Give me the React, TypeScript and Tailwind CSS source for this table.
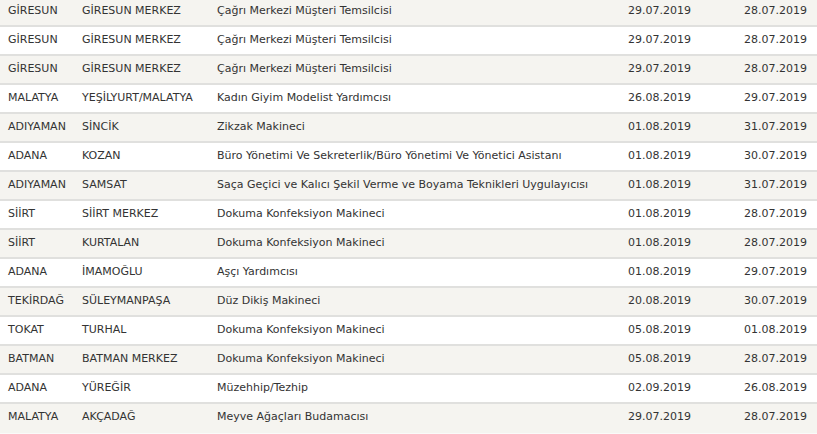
const rows = [
  ["GİRESUN", "GİRESUN MERKEZ", "Çağrı Merkezi Müşteri Temsilcisi", "29.07.2019", "28.07.2019"],
  ["GİRESUN", "GİRESUN MERKEZ", "Çağrı Merkezi Müşteri Temsilcisi", "29.07.2019", "28.07.2019"],
  ["GİRESUN", "GİRESUN MERKEZ", "Çağrı Merkezi Müşteri Temsilcisi", "29.07.2019", "28.07.2019"],
  ["MALATYA", "YEŞİLYURT/MALATYA", "Kadın Giyim Modelist Yardımcısı", "26.08.2019", "29.07.2019"],
  ["ADIYAMAN", "SİNCİK", "Zikzak Makineci", "01.08.2019", "31.07.2019"],
  ["ADANA", "KOZAN", "Büro Yönetimi Ve Sekreterlik/Büro Yönetimi Ve Yönetici Asistanı", "01.08.2019", "30.07.2019"],
  ["ADIYAMAN", "SAMSAT", "Saça Geçici ve Kalıcı Şekil Verme ve Boyama Teknikleri Uygulayıcısı", "01.08.2019", "31.07.2019"],
  ["SİİRT", "SİİRT MERKEZ", "Dokuma Konfeksiyon Makineci", "01.08.2019", "28.07.2019"],
  ["SİİRT", "KURTALAN", "Dokuma Konfeksiyon Makineci", "01.08.2019", "28.07.2019"],
  ["ADANA", "İMAMOĞLU", "Aşçı Yardımcısı", "01.08.2019", "29.07.2019"],
  ["TEKİRDAĞ", "SÜLEYMANPAŞA", "Düz Dikiş Makineci", "20.08.2019", "30.07.2019"],
  ["TOKAT", "TURHAL", "Dokuma Konfeksiyon Makineci", "05.08.2019", "01.08.2019"],
  ["BATMAN", "BATMAN MERKEZ", "Dokuma Konfeksiyon Makineci", "05.08.2019", "28.07.2019"],
  ["ADANA", "YÜREĞİR", "Müzehhip/Tezhip", "02.09.2019", "26.08.2019"],
  ["MALATYA", "AKÇADAĞ", "Meyve Ağaçları Budamacısı", "29.07.2019", "28.07.2019"],
];

export default function App() {
  return (
    <div className="h-[434px] w-[817px] overflow-hidden bg-[#fafaf9]">
      <div
        className="-mt-[2px] text-[11px] text-[#333]"
        style={{ fontFamily: '"DejaVu Sans", Verdana, sans-serif' }}
      >
        {rows.map((r, i) => (
          <div
            key={i}
            className={`grid h-[29px] grid-cols-[82px_135px_1fr_100px_118px] items-center ${
              i < rows.length - 1 ? "border-b-2 border-[#e0e0de]" : "border-b-2 border-[#f5f4f0]"
            } ${i % 2 === 0 ? "bg-[#f5f4f0]" : "bg-white"}`}
          >
            <div className="pl-2 whitespace-nowrap">{r[0]}</div>
            <div className="whitespace-nowrap">{r[1]}</div>
            <div className="whitespace-nowrap">{r[2]}</div>
            <div className="pr-2 text-right">{r[3]}</div>
            <div className="pr-[10px] text-right">{r[4]}</div>
          </div>
        ))}
      </div>
    </div>
  );
}
